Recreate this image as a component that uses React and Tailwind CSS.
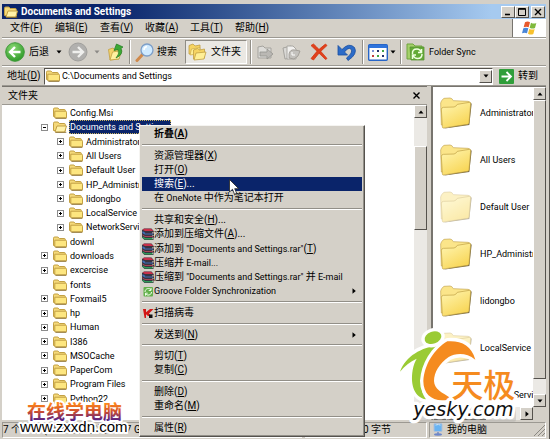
const menus = [
  ["文件", "F"],
  ["编辑", "E"],
  ["查看", "V"],
  ["收藏", "A"],
  ["工具", "T"],
  ["帮助", "H"],
];

const tree = [
  { name: "Config.Msi", level: 1 },
  { name: "Documents and Settings", level: 1, toggle: "minus", selected: true },
  { name: "Administrator", level: 2, toggle: "plus" },
  { name: "All Users", level: 2, toggle: "plus" },
  { name: "Default User", level: 2, toggle: "plus" },
  { name: "HP_Administrator", level: 2, toggle: "plus" },
  { name: "lidongbo", level: 2, toggle: "plus" },
  { name: "LocalService", level: 2, toggle: "plus" },
  { name: "NetworkService", level: 2, toggle: "plus" },
  { name: "downl", level: 1 },
  { name: "downloads", level: 1, toggle: "plus" },
  { name: "excercise", level: 1, toggle: "plus" },
  { name: "fonts", level: 1 },
  { name: "Foxmail5", level: 1, toggle: "plus" },
  { name: "hp", level: 1, toggle: "plus" },
  { name: "Human", level: 1, toggle: "plus" },
  { name: "I386", level: 1, toggle: "plus" },
  { name: "MSOCache", level: 1, toggle: "plus" },
  { name: "PaperCom", level: 1, toggle: "plus" },
  { name: "Program Files", level: 1, toggle: "plus" },
  { name: "Python22", level: 1, toggle: "plus" },
];

const files = [
  { name: "Administrator" },
  { name: "All Users" },
  { name: "Default User", hidden: true },
  { name: "HP_Administrator" },
  { name: "lidongbo" },
  { name: "LocalService", hidden: true },
  { name: "NetworkService", hidden: true },
];

const contextMenu = [
  { text: "折叠", hotkey: "A", bold: true },
  null,
  { text: "资源管理器", hotkey: "X" },
  { text: "打开", hotkey: "O" },
  { text: "搜索", hotkey: "E", after: "...", active: true },
  { text: "在 OneNote 中作为笔记本打开" },
  null,
  { text: "共享和安全", hotkey: "H", after: "..." },
  { text: "添加到压缩文件", hotkey: "A", after: "...", icon: "rar" },
  { text: '添加到 "Documents and Settings.rar"', hotkey: "T", icon: "rar" },
  { text: "压缩并 E-mail...", icon: "rar" },
  { text: '压缩到 "Documents and Settings.rar" 并 E-mail', icon: "rar" },
  { text: "Groove Folder Synchronization", icon: "groove", submenu: true },
  null,
  { text: "扫描病毒", icon: "kaspersky" },
  null,
  { text: "发送到", hotkey: "N", submenu: true },
  null,
  { text: "剪切", hotkey: "T" },
  { text: "复制", hotkey: "C" },
  null,
  { text: "删除", hotkey: "D" },
  { text: "重命名", hotkey: "M" },
  null,
  { text: "属性", hotkey: "R" },
];

// Latin letters are set one size below the Chinese ones
const Mixed = ({ text }) =>
  text.split(/([\x20-\x7e]+)/).map((part, i) =>
    i % 2 ? (
      <span key={i} className="text-[9px] whitespace-pre">
        {part}
      </span>
    ) : (
      part
    )
  );

const Hotkey = ({ letter }) => (
  <>
    (<span className="underline">{letter}</span>)
  </>
);

const FolderIcon = ({ open }) => (
  <svg viewBox="0 0 14 12" className="h-3 w-3.5 shrink-0">
    <path d="M.5 9.5V2.2Q.5 1 1.7 1h3.2l1.4 1.5h5q1 0 1 1v6.7z" fill="#f5d97a" stroke="#c2a044" />
    {open ? (
      <path d="M2 11 4 5h9.5l-1.8 6z" fill="#fff2a8" stroke="#c2a044" />
    ) : (
      <path d="M1.8 10.8V4.2h10.7q1 0 1 1v5.6z" fill="#fde680" stroke="#c2a044" />
    )}
    <path d="M2.5 11.4h10.8" stroke="#87692a" strokeWidth=".8" />
  </svg>
);

const BigFolder = ({ faded }) => (
  <svg viewBox="0 0 96 96" className={`size-8 shrink-0 ${faded ? "opacity-50" : ""}`}>
    <defs>
      <linearGradient id="folderFront" x1="0" y1="0" x2=".6" y2="1">
        <stop offset="0" stopColor="#fff6b4" />
        <stop offset="1" stopColor="#f8d656" />
      </linearGradient>
    </defs>
    <path d="M9 95 88 84 95 20 90 16 84 76z" fill="#75694a" />
    <path d="M4 84 2 18Q3 10 12 4L30 3Q36 3 40 11L84 13Q90 13 90 18L86 78z" fill="#fbe58a" stroke="#c2a551" strokeWidth="2" />
    <path d="M4 36Q5 32 10 31L42 30Q48 29 52 22L88 16Q92 16 92 20L87 78Q87 81 83 82L10 93Q7 93 7 89z" fill="url(#folderFront)" stroke="#bd9d40" strokeWidth="2" />
  </svg>
);

const ItemIcon = ({ type }) => {
  if (type === "rar") {
    return (
      <svg viewBox="0 0 12 12" className="size-3">
        <path d="M0 2 2 .5h7.500L12 3.500v7.500l-1 1H2.500L0 9.500z" fill="#3a3340" />
        <path d="M.5 1.800 2 .8h7L11.500 3H3z" fill="#c8304a" />
        <path d="M.5 4.500 3 6h8M.5 3.800 3 5.200" stroke="#3f6fb8" strokeWidth="1.200" fill="none" />
        <path d="M.5 7 3 8.500h8" stroke="#c24a5c" strokeWidth=".8" fill="none" />
        <path d="M.5 9 3 10.800h8" stroke="#2f9a58" strokeWidth="1.500" fill="none" />
        <path d="M11 4v1.500M11 7v1M11 9.500v1.500" stroke="#e8e2d0" />
      </svg>
    );
  }
  if (type === "groove") {
    return (
      <svg viewBox="0 0 12 12" className="size-3">
        <rect x="1.500" y="2" width="9.500" height="9.500" rx="1" fill="#63b04b" />
        <path d="M3 7c0-4 5-4.500 6-2m0-2v2.400H6.700M9.500 7c0 3.400-4.600 4-6 1.600m0 2V8.200h2.200" fill="none" stroke="#f1ffe9" />
      </svg>
    );
  }
  if (type === "kaspersky") {
    return (
      <svg viewBox="0 0 12 12" className="size-3">
        <path d="M1 2h3v3.200L8 2h3.500L7 6.500 9 9H6L4 7.200V11H2.600z" fill="#d31717" />
        <path d="M7 7.500h3.500V11H7z" fill="#111" />
      </svg>
    );
  }
  return null;
};

const Arrow = ({ dir = "down", className = "" }) => (
  <svg viewBox="0 0 6 6" className={`size-[6px] shrink-0 ${className}`}>
    {dir === "down" && <path d="M.5 1.500h5L3 4.500z" />}
    {dir === "up" && <path d="M.5 4.500h5L3 1.500z" />}
    {dir === "left" && <path d="M4.500 .2v5.600L1.200 3z" />}
    {dir === "right" && <path d="M1.500 .2v5.600L4.800 3z" />}
  </svg>
);

const raised = "border border-t-white border-l-white border-r-[#55524d] border-b-[#55524d] bg-[#d4d0c8]";

const ScrollButton = ({ dir, label }) => (
  <button type="button" aria-label={label} className={`flex size-[13px] shrink-0 items-center justify-center ${raised}`}>
    <Arrow dir={dir} />
  </button>
);

const Divider = () => <span className="h-6 w-0.5 shrink-0 border-l border-r border-l-[#928f88] border-r-white" />;

const TitleBar = () => (
  <header className="flex h-[15px] shrink-0 items-center gap-[3px] bg-linear-to-r from-[#0a246a] from-20% to-[#a6caf0] to-90% pr-px pl-0.5">
    <FolderIcon open />
    <h1 className="flex-1 text-[10px] leading-3 font-bold text-white">Documents and Settings</h1>
    <div className="flex items-center">
      <button type="button" aria-label="最小化" className={`flex h-3 w-3.5 items-center justify-center ${raised}`}>
        <svg viewBox="0 0 10 8" className="h-2 w-2.5"><path d="M2 6.500h5" stroke="#000" strokeWidth="1.600" /></svg>
      </button>
      <button type="button" aria-label="最大化" className={`flex h-3 w-3.5 items-center justify-center ${raised}`}>
        <svg viewBox="0 0 10 8" className="h-2 w-2.5"><path d="M1.500.500h7v7h-7zM1.500 1.300h7" fill="none" stroke="#000" /></svg>
      </button>
      <button type="button" aria-label="关闭" className={`ml-0.5 flex h-3 w-3.5 items-center justify-center ${raised}`}>
        <svg viewBox="0 0 10 8" className="h-2 w-2.5"><path d="m2 1 6 6m0-6L2 7" stroke="#000" strokeWidth="1.400" /></svg>
      </button>
    </div>
  </header>
);

const MenuBar = () => (
  <nav className="flex h-[19px] shrink-0 items-stretch border-b border-[#9c9992]">
    <div className="flex flex-1 items-center pl-2">
      {menus.map(([text, letter]) => (
        <button key={letter} type="button" className="w-[45px] text-left">
          {text}
          <Hotkey letter={letter} />
        </button>
      ))}
    </div>
    <div className="flex w-[34px] items-center justify-center border-l border-[#77746e] bg-white">
      <svg viewBox="0 0 48 42" className="h-3.5 w-4">
        <path d="M9 4q8-5 15 0l-4 15q-7-4-15 0z" fill="#e8592b" />
        <path d="M27 5q8 5 16 1l-4 15q-8 4-16-1z" fill="#7fb93c" />
        <path d="M4 22q8-4 15 0l-4 15q-7-4-15 0z" fill="#4a86d8" />
        <path d="M22 23q8 5 16 1l-4 15q-8 4-16-1z" fill="#f8c12d" />
      </svg>
    </div>
  </nav>
);

const Toolbar = () => (
  <div className="flex h-[28px] shrink-0 items-center border-t border-b border-t-white border-b-[#9c9992] pl-[3px]">
    <button type="button" className="flex items-center gap-1">
      <svg viewBox="0 0 20 20" className="size-5">
        <defs>
          <radialGradient id="green" cx=".4" cy=".3" r=".8">
            <stop offset="0" stopColor="#8ad873" />
            <stop offset="1" stopColor="#259321" />
          </radialGradient>
        </defs>
        <circle cx="10" cy="10" r="9.300" fill="url(#green)" stroke="#3f9a3a" />
        <path d="M15.500 10H5.500m4.500-5-5 5 5 5" fill="none" stroke="#fff" strokeWidth="2.400" />
      </svg>
      后退
    </button>
    <button type="button" aria-label="后退列表" className="ml-1 flex w-3 justify-center"><Arrow /></button>
    <button type="button" aria-label="前进" className="ml-[3px]">
      <svg viewBox="0 0 20 20" className="size-5">
        <circle cx="10" cy="10" r="9" fill="#b1b0ae" stroke="#a09f9c" />
        <path d="M4.500 10h10m-4.500-5 5 5-5 5" fill="none" stroke="#efefed" strokeWidth="2.400" />
      </svg>
    </button>
    <button type="button" aria-label="前进列表" className="ml-[3px] flex w-3 justify-center"><Arrow className="fill-[#8b8985]" /></button>
    <button type="button" aria-label="向上" className="ml-1">
      <svg viewBox="0 0 18 18" className="size-[18px]">
        <path d="M1.500 6.500 6 5l2 2 4-1v10l-9 1z" fill="#f4d36a" stroke="#c2a044" strokeWidth=".8" />
        <path d="m3 17 2.500-8 9-1.500L12 16z" fill="#fff1a0" stroke="#c2a044" strokeWidth=".8" />
        <path d="M9 15q4-4 2-8.500L7 7.500 9.500 1 16 4l-2 1.300q3 6-5 9.700z" fill="#3ba935" stroke="#237a20" strokeWidth=".7" />
      </svg>
    </button>
    <span className="ml-1 flex"><Divider /></span>
    <button type="button" className="ml-1 flex items-center gap-[3px]">
      <svg viewBox="0 0 19 19" className="size-[19px]">
        <path d="m8 11-6 6.500" stroke="#d08a4c" strokeWidth="3" strokeLinecap="round" />
        <circle cx="12" cy="7" r="6" fill="#cfeaff" stroke="#7d9fc9" strokeWidth="1.300" />
        <path d="M9 7q0-3 3-3.500" stroke="#fff" strokeWidth="1.500" fill="none" />
      </svg>
      搜索
    </button>
    <button type="button" aria-pressed="true" className="ml-2 flex h-6 items-center gap-1 border border-t-[#8f8c85] border-r-white border-b-white border-l-[#8f8c85] bg-[#eae8e3] pr-[5px] pl-0.5">
      <svg viewBox="0 0 19 18" className="h-[18px] w-[19px]">
        <path d="M1 11V2.500L5 1l2 2 5-1v9z" fill="#f6d462" stroke="#c2a044" strokeWidth=".8" />
        <path d="m2 12 1.500-6L12 4.500 11 11z" fill="#ffef96" stroke="#c2a044" strokeWidth=".6" />
        <path d="M5.500 16V7l4-1.500 2 1.500 5-1v9z" fill="#f6d462" stroke="#c2a044" strokeWidth=".8" />
        <path d="m6 17 2-7 10-1-2 7z" fill="#ffef96" stroke="#c2a044" strokeWidth=".8" />
      </svg>
      文件夹
    </button>
    <span className="ml-[3px] flex"><Divider /></span>
    <button type="button" aria-label="移动到" className="ml-1">
      <svg viewBox="0 0 18 18" className="size-[18px]">
        <path d="M2 15V4l5-1 2 2h6v10z" fill="#dddcd9" stroke="#a5a39e" />
        <path d="M4 9h7V6l6 5-6 5v-3H4z" fill="#bab8b4" stroke="#96948f" strokeWidth=".8" />
      </svg>
    </button>
    <button type="button" aria-label="复制到" className="ml-2">
      <svg viewBox="0 0 19 18" className="h-[18px] w-[19px]">
        <path d="M1 5 9 3l1 12-7 1z" fill="#d9d8d5" stroke="#a5a39e" />
        <path d="M5 3h6l3 3v10H5z" fill="#f1f0ee" stroke="#aaa8a3" />
        <path d="M7 11q1-5 6-4l5 1-2 5-4 3-5-1z" fill="#c3c1bd" stroke="#99968f" strokeWidth=".8" />
        <path d="M10 9v3h3" stroke="#fff" fill="none" />
      </svg>
    </button>
    <button type="button" aria-label="删除" className="ml-[9px]">
      <svg viewBox="0 0 18 18" className="size-[18px]">
        <path d="M1 2.500 3.500 1Q9 6 17 15.500l-1.500 1Q8 9 1 2.500z" fill="#e0401d" stroke="#d53812" strokeWidth=".8" />
        <path d="M15.500 1 17 2.500Q9 9 3.500 17L1 15.500Q7 7 15.500 1z" fill="#e0401d" stroke="#d53812" strokeWidth=".8" />
      </svg>
    </button>
    <button type="button" aria-label="撤消" className="ml-[9px]">
      <svg viewBox="0 0 19 18" className="h-[18px] w-[19px]">
        <path d="M1 2.500v9.500h9.500L7.500 9Q11 4 14 6q2.500 3.500-4.500 9l1.500 2.500Q21 11 17.500 4.500 12-1 5 6.500z" fill="#2c6bc8" stroke="#1b4f9e" strokeWidth=".8" />
      </svg>
    </button>
    <span className="ml-[6px] flex"><Divider /></span>
    <button type="button" aria-label="查看" className="ml-1 flex items-center">
      <svg viewBox="0 0 20 17" className="h-[17px] w-5">
        <rect x=".7" y=".7" width="18.600" height="15.600" rx="1" fill="#fff" stroke="#2765c7" strokeWidth="1.400" />
        <path d="M1 2.500h18" stroke="#2f74dc" strokeWidth="3" />
        <path d="M4 7h2" stroke="#7d92d4" strokeWidth="2" />
        <path d="M9 7h2M14 12h2" stroke="#23326a" strokeWidth="2" />
        <path d="M14 7h2M9 12h2" stroke="#42a545" strokeWidth="2" />
        <path d="M4 12h2" stroke="#c03c3c" strokeWidth="2" />
      </svg>
      <Arrow className="ml-0.5" />
    </button>
    <span className="ml-1 flex"><Divider /></span>
    <button type="button" className="ml-1 flex items-center gap-1 whitespace-nowrap">
      <svg viewBox="0 0 19 18" className="h-[18px] w-[19px]">
        <path d="M1 1h6l2 2h7v13H1z" fill="#a4d16a" stroke="#6fa53c" />
        <path d="M4 4h14v13H5z" fill="#63ab37" stroke="#5b9236" strokeWidth=".8" />
        <path d="M6.500 11q-.5-5 4.500-5 3 0 4 3m.5-3v3.500H12M16 11q0 4.500-4.500 4.500-3 0-4.500-3M6.500 16v-4H10" fill="none" stroke="#efffe0" strokeWidth="1.500" />
      </svg>
      <Mixed text="Folder Sync" />
    </button>
  </div>
);

const AddressBar = () => (
  <form className="flex h-5 shrink-0 items-center border-t border-b border-t-white border-b-[#9c9992] pl-[5px]" onSubmit={(e) => e.preventDefault()}>
    <label htmlFor="address" className="w-[37px] shrink-0">
      地址
      <Hotkey letter="D" />
    </label>
    <div className="flex h-[17px] flex-1 items-center border border-t-[#55524d] border-r-white border-b-white border-l-[#55524d] bg-white pl-px">
      <FolderIcon />
      <input id="address" defaultValue="C:\Documents and Settings" className="ml-0.5 h-[15px] min-w-0 flex-1 bg-white text-[9px] outline-none" />
      <ScrollButton dir="down" label="地址列表" />
    </div>
    <button type="submit" className="mr-2 ml-1.5 flex items-center gap-1">
      <svg viewBox="0 0 15 15" className="size-[15px]">
        <rect width="15" height="15" rx="1" fill="#2f9e3a" />
        <path d="M2.500 7.500h9M7.500 3 12 7.500 7.500 12" fill="none" stroke="#fff" strokeWidth="1.800" />
      </svg>
      转到
    </button>
  </form>
);

const TreeRow = ({ item }) => (
  <li className={`flex min-h-0 flex-1 items-center ${item.level === 2 ? "pl-[55px]" : "pl-[39px]"}`}>
    <span className="flex w-3 shrink-0">
      {item.toggle && (
        <svg viewBox="0 0 7 7" className="size-[7px]">
          <rect x=".5" y=".5" width="6" height="6" fill="#fff" stroke="#8c8c8c" />
          <path d={item.toggle === "plus" ? "M2 3.500h3M3.500 2v3" : "M2 3.500h3"} stroke="#000" />
        </svg>
      )}
    </span>
    <FolderIcon open={item.selected} />
    <span
      className={`ml-0.5 border pr-0.5 text-[9px] leading-3 whitespace-nowrap ${
        item.selected ? "border-dotted border-[#c8b060] bg-[#0a246a] text-white" : "border-transparent"
      }`}
    >
      {item.name}
    </span>
  </li>
);

const FolderPane = () => (
  <aside className="flex w-[425px] min-w-0 flex-col border-t border-[#77746e]">
    <div className="flex h-[18px] shrink-0 items-center justify-between border-b border-[#9c9992] pr-[7px] pl-[6px]">
      <h2>文件夹</h2>
      <button type="button" aria-label="关闭文件夹">
        <svg viewBox="0 0 7 7" className="size-[7px]"><path d="m.5.500 6 6m0-6-6 6" stroke="#000" strokeWidth="1.400" /></svg>
      </button>
    </div>
    <div className="flex min-h-0 flex-1 bg-white">
      <ul className="flex min-w-0 flex-1 flex-col overflow-hidden pt-px pb-3.5">
        {tree.map((item) => (
          <TreeRow key={item.name} item={item} />
        ))}
      </ul>
      <div className="flex w-[13px] shrink-0 flex-col bg-[#ebe9e5]">
        <ScrollButton dir="up" label="向上滚动" />
        <div className={`mt-7 h-[84px] ${raised}`} />
      </div>
    </div>
  </aside>
);

const FilePane = () => (
  <main className="flex min-w-0 flex-1 border-t border-l-2 border-[#77746e] bg-white">
    <div className="flex min-w-0 flex-1 flex-col">
      <ul className="flex min-h-0 flex-1 flex-col overflow-hidden pt-0.5">
        {files.map((file) => (
          <li key={file.name} className="flex h-[47px] shrink-0 items-center gap-2 pl-[7px]">
            <BigFolder faded={file.hidden} />
            <span className="text-[9px] whitespace-nowrap">{file.name}</span>
          </li>
        ))}
      </ul>
      <div className="flex h-[13px] shrink-0 bg-[#ebe9e5]">
        <ScrollButton dir="left" label="向左滚动" />
        <div className={`w-10 ${raised}`} />
        <span className="flex-1" />
        <ScrollButton dir="right" label="向右滚动" />
      </div>
    </div>
    <div className="flex w-[13px] shrink-0 flex-col bg-[#ebe9e5]">
      <ScrollButton dir="up" label="向上滚动" />
      <div className={`h-[279px] ${raised}`} />
      <span className="flex-1" />
      <ScrollButton dir="down" label="向下滚动" />
      <div className="h-[13px] bg-[#d4d0c8]" />
    </div>
  </main>
);

const StatusBar = () => (
  <footer className="flex h-[18px] shrink-0 items-center gap-0.5 pt-px whitespace-nowrap">
    <p className="flex h-4 w-[300px] items-center border border-t-[#9c9992] border-r-white border-b-white border-l-[#9c9992]">
      7 个对象 (可用磁盘空间: 21.7 GB)
    </p>
    <p className="flex h-4 w-[123px] items-center border border-t-[#9c9992] border-r-white border-b-white border-l-[#9c9992] pl-[58px]">0 字节</p>
    <p className="flex h-4 flex-1 items-center gap-1 border border-t-[#9c9992] border-r-white border-b-white border-l-[#9c9992] pl-[3px]">
      <svg viewBox="0 0 10 13" className="h-[13px] w-2.5">
        <rect x="1" y=".5" width="8" height="8" rx="1" fill="#68b3f2" stroke="#aebfd8" />
        <path d="M2.500 2q3-1 5 0" stroke="#d5efff" />
        <path d="M4 9h2v2H4z" fill="#8e9cc0" />
        <ellipse cx="5" cy="11.500" rx="4" ry="1.200" fill="#6d86c8" />
      </svg>
      <span className="flex-1">我的电脑</span>
      <svg viewBox="0 0 12 12" className="size-3">
        <path d="m1 12 11-11M5 12l7-7M9 12l3-3" stroke="#8b8882" />
      </svg>
    </p>
  </footer>
);

const ContextMenu = () => (
  <div role="menu" className="absolute top-[125px] left-[139px] flex h-[312px] w-[226px] flex-col justify-between border border-t-[#f5f4f1] border-r-[#55524d] border-b-[#55524d] border-l-[#f5f4f1] bg-[#d4d0c8] px-0.5 py-px shadow-[inset_-1px_-1px_0_#928f88]">
    {contextMenu.map((item, i) =>
      item ? (
        <button
          key={i}
          type="button"
          role="menuitem"
          className={`flex h-3.5 w-full items-center pr-[5px] text-left whitespace-nowrap ${item.bold ? "font-bold" : ""} ${
            item.active ? "bg-[#0a246a] text-white" : ""
          }`}
        >
          <span className="flex w-3 shrink-0">
            <ItemIcon type={item.icon} />
          </span>
          <span className="flex-1">
            <Mixed text={item.text} />
            {item.hotkey && <Hotkey letter={item.hotkey} />}
            {item.after}
          </span>
          {item.submenu && <Arrow dir="right" />}
        </button>
      ) : (
        <div key={i} role="separator" className="flex h-[7px] items-center">
          <span className="h-0.5 w-full border-t border-b border-t-[#928f88] border-b-white" />
        </div>
      )
    )}
  </div>
);

const Cursor = () => (
  <svg viewBox="0 0 10 17" className="absolute top-[179px] left-[229px] h-[17px] w-2.5">
    <path d="M.5.500v12.500l3-2.700 2 5 2.200-1-2-4.600h4z" fill="#fff" stroke="#222" strokeWidth=".8" />
  </svg>
);

const SiteMark = () => (
  <svg viewBox="0 0 116 38" className="absolute top-[400px] left-[17px] h-[38px] w-[116px]">
    <defs>
      <linearGradient id="sunset" x1="0" y1="3" x2="0" y2="21" gradientUnits="userSpaceOnUse">
        <stop offset="0" stopColor="#ff8a1c" />
        <stop offset=".45" stopColor="#d2502c" />
        <stop offset="1" stopColor="#4a1d8e" />
      </linearGradient>
    </defs>
    <g stroke="#fff" strokeWidth="4" strokeLinejoin="round" className="[paint-order:stroke]">
      <text x="10" y="19" fill="url(#sunset)" className="font-['Noto_Sans_CJK_SC',sans-serif] text-[19px] font-bold">在线学电脑</text>
      <text x="3" y="32" fill="#000" className="font-['Liberation_Sans',sans-serif] text-[15px]">www.zxxdn.com</text>
    </g>
  </svg>
);

const YeskyMark = () => (
  <svg viewBox="111 219 372 297" className="absolute top-[328px] left-[397px] h-[99px] w-[124px]">
    <path d="M172 462h290v32H172z" fill="#999" stroke="#999" strokeWidth="12" strokeLinejoin="round" opacity=".3" />
    <g stroke="#fff" strokeWidth="20" strokeLinejoin="round" className="[paint-order:stroke]">
      <path d="M200 380h240v65H200z" fill="#fff" />
      <path d="M120 350C138 302 182 278 240 269 212 294 190 330 185 375 182 400 188 420 198 433 165 428 150 392 158 345 161 330 165 319 170 311 150 320 134 333 120 350z" fill="#9acb34" />
      <ellipse cx="219" cy="248" rx="26" ry="18" transform="rotate(-20 219 248)" fill="#9acb34" />
      <path d="M262 259C302 256 334 270 346 314 318 291 286 295 266 306 238 326 222 352 222 378 223 402 244 412 276 431 226 446 190 424 190 378 193 330 222 282 262 259z" fill="#f58b1f" />
      <text x="274" y="425" fill="#f58b1f" className="font-['Noto_Sans_CJK_SC',sans-serif] text-[96px] font-medium">天极</text>
      <text x="160" y="482" fill="#111" className="font-['DejaVu_Sans',sans-serif] text-[57px] italic">yesky.com</text>
    </g>
  </svg>
);

const App = () => {
  return (
    <div className="relative flex h-screen flex-col overflow-hidden border-r border-[#55524d] bg-[#d4d0c8] pt-1 pr-[3px] pb-px pl-0.5 font-['Roboto','Noto_Sans_CJK_SC',sans-serif] text-[10px] leading-[14px] text-black">
      <TitleBar />
      <MenuBar />
      <Toolbar />
      <AddressBar />
      <div className="flex min-h-0 flex-1 gap-1">
        <FolderPane />
        <FilePane />
      </div>
      <StatusBar />
      <ContextMenu />
      <Cursor />
      <SiteMark />
      <YeskyMark />
    </div>
  );
};

export default App;
